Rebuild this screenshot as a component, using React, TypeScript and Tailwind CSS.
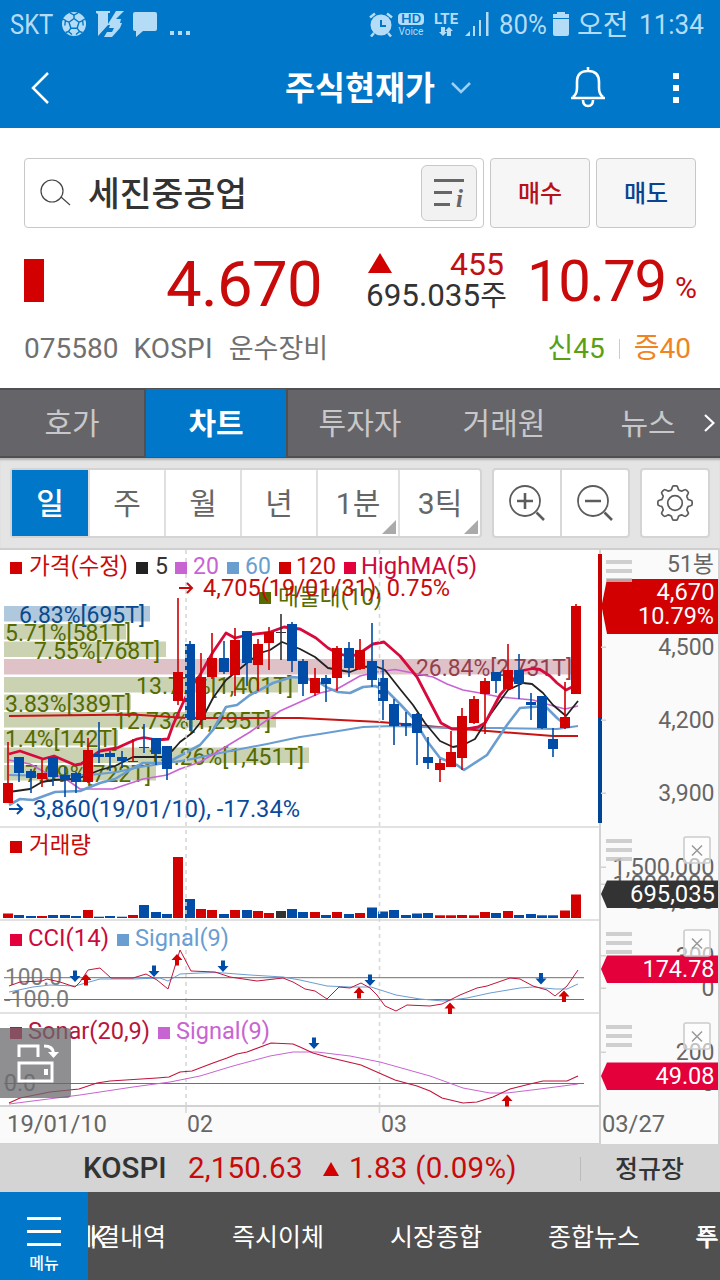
import React from "react";

const RED = "#d20000";
const BLUE = "#004ca6";
const PINK = "#e4003a";
const SKY = "#6a9dd0";
const VIOLET = "#c864d2";
const OLIVE = "#556b00";
const DARK = "#333333";

// type, body top, body bottom, high, low, volume bar height
type Candle = [string, number, number, number, number, number];

const candles: Candle[] = [
    ["r", 783, 803, 742, 803, 4.5],
    ["b", 757, 773, 757, 782, 3],
    ["b", 771, 778, 769, 793, 2],
    ["r", 773, 779, 760, 787, 2],
    ["b", 757, 777, 757, 786, 3],
    ["b", 775, 780, 767, 797, 3],
    ["b", 773, 782, 772, 793, 2],
    ["r", 750, 782, 738, 783, 8],
    ["b", 754, 757, 722, 763, 1.3],
    ["b", 753, 757, 751, 771, 2],
    ["b", 757, 761, 751, 768, 1.3],
    ["r", 761, 762, 739, 762, 3],
    ["b", 747, 748, 724, 753, 13],
    ["b", 738, 754, 738, 765, 6],
    ["b", 746, 769, 746, 780, 4],
    ["r", 672, 701, 598, 705, 61],
    ["b", 644, 720, 641, 731, 19],
    ["r", 677, 720, 653, 725, 9],
    ["r", 658, 677, 633, 679, 8],
    ["b", 658, 672, 641, 674, 4],
    ["r", 640, 675, 628, 696, 8],
    ["b", 631, 663, 631, 686, 8],
    ["r", 644, 665, 639, 691, 7],
    ["r", 632, 643, 627, 670, 5],
    ["k", 632, 633, 614, 660, 7],
    ["b", 624, 661, 622, 672, 9],
    ["b", 661, 684, 659, 696, 6],
    ["r", 678, 693, 668, 696, 6],
    ["b", 678, 684, 675, 702, 3],
    ["r", 648, 678, 646, 691, 6],
    ["b", 648, 668, 642, 677, 4],
    ["r", 650, 669, 639, 670, 5],
    ["b", 661, 680, 623, 687, 10.5],
    ["b", 678, 701, 660, 720, 6.5],
    ["b", 704, 726, 699, 745, 8],
    ["b", 723, 726, 712, 736, 3],
    ["b", 714, 733, 713, 765, 4.5],
    ["b", 757, 763, 737, 769, 5],
    ["r", 763, 770, 759, 782, 2.7],
    ["r", 752, 767, 731, 767, 2.7],
    ["r", 716, 758, 708, 770, 3],
    ["r", 699, 723, 696, 724, 2.7],
    ["r", 681, 694, 678, 734, 6],
    ["b", 672, 681, 672, 693, 5],
    ["r", 670, 689, 644, 690, 7],
    ["b", 670, 684, 654, 699, 3],
    ["b", 702, 705, 693, 720, 4],
    ["b", 696, 728, 696, 729, 2.7],
    ["b", 739, 749, 728, 757, 2.7],
    ["r", 717, 728, 682, 729, 7.5],
    ["r", 606, 694, 604, 694, 23.5],
];

const volumeBands = [
    { y: 606, end: 150, fill: "#afc8de", color: "#0a4a8c", text: "6.83%[695T]", x: 19, w: 126 },
    { y: 624, end: 126, fill: "#cad2b2", color: OLIVE, text: "5.71%[581T]", x: 5, w: 126 },
    { y: 641.5, end: 166, fill: "#cad2b2", color: OLIVE, text: "7.55%[768T]", x: 34, w: 126 },
    { y: 659, end: 572, fill: "#dfc2c8", color: "#94404c", text: "26.84%[2,731T]", x: 416, w: 156 },
    { y: 677, end: 298, fill: "#cad2b2", color: OLIVE, text: "13.77%[1,401T]", x: 136, w: 157 },
    { y: 694.5, end: 131, fill: "#cad2b2", color: OLIVE, text: "3.83%[389T]", x: 5, w: 126 },
    { y: 712, end: 276, fill: "#cad2b2", color: OLIVE, text: "12.73%[1,295T]", x: 114, w: 157 },
    { y: 730, end: 118, fill: "#cad2b2", color: OLIVE, text: "1.4%[142T]", x: 5, w: 113 },
    { y: 747.5, end: 309, fill: "#cad2b2", color: OLIVE, text: "14.26%[1,451T]", x: 148, w: 156 },
    { y: 765, end: 156, fill: "#cad2b2", color: OLIVE, text: "7.09%[722T]", x: 25, w: 126 },
];

const highMa = "9,754 20,751 43,759 54,756 75,765 81,764 100,751 117,748 128,743 137,739 144,737.5 157,740 168,739 173,725 182,705 190,688 200,675 213,652 226,633 235,638 247,635 269,632.5 284,627 300,629 316,638 328,648 337,653 350,657 360,653 373,644 384,642 400,656 417,677 430,702 441,723 452,729 467,729 478,727 485,723 500,695 513,680 520,671 533,668.5 540,669.5 550,676 557,683 566,690 572,687";
const lowMa = "9,805 20,799 33,800 55,792 80,791 100,783 115,779 133,768 143,763 167,763 187,752 200,745 213,730 226,707 237,705 250,695 273,683 292,677 305,678 320,683 328,688 338,692 350,693 363,687 375,686 387,691 400,704 413,718 427,741 440,758 457,765 464,770 487,755 507,725 520,708 545,706 557,718 563,723 570,722";
const ma5 = "9,792 30,789 42,782 53,780 77,779 100,770 115,766 133,757 165,757 173,750 180,742 192,733 200,723 213,698 226,680 247,663 260,653 270,650 282,642 300,649 315,657 328,668 350,672 363,667 375,666 385,670 400,689 413,705 425,723 440,741 453,747 463,745 475,739 490,715 508,690 523,683 532,684 543,693 553,705 566,716 578,701";
const ma20 = "9,760 30,764 50,775 63,777 80,789 113,789 143,779 167,775 180,769 200,762 217,752 250,732 280,711 300,702 320,693 337,689 360,676 377,672 395,669.5 413,673 433,677 447,684 463,690 480,693 500,697 533,700 550,705 565,709 578,706";
const ma60 = "9,775 53,776 90,775 117,772 140,767 187,760 220,753 267,744 300,737 320,734 363,727 393,726 450,728 500,728 557,729 578,726";
const ma120 = "9,716 133,714.5 187,718 300,718 380,722 450,728 500,732 553,736 578,736";
const cci = "9,986 20,982 42,981 47,979 60,982 75,987 80,982 88,970 100,968 111,978 133,978 146,974 157,980 168,989 180,950 191,971 215,972 230,977 257,981 283,978 293,982 300,986 305,989 315,991 327,999 339,987 350,988 361,983 370,988 377,995 385,1006 396,1011 407,1005 430,1006 442,1004 460,995 477,988 487,986 510,978 520,979 533,986 547,990 555,996 567,986 578,970";
const cciSignal = "9,992 33,987 50,985 75,986 100,979 133,979 160,978 168,981 180,974 200,973 217,972.5 250,975 283,977 300,980 327,986 350,987 371,987 396,995 420,999 443,1001 467,998 490,993 520,988 533,987 555,989 567,989 578,984";
const sonar = "9,1103 20,1098 50,1092 79,1089 97,1083 110,1081 157,1078 169,1077 180,1072 192,1071 213,1063 227,1058 237,1054 247,1052 271,1043 293,1044 300,1047 313,1053 327,1057 361,1065 395,1080 417,1086 430,1091 442,1098 463,1103 477,1102 493,1097 510,1089 530,1084 543,1081 567,1081 578,1076";
const sonarSignal = "9,1104 80,1095 133,1087 170,1082 200,1076 233,1066 270,1056 293,1052 317,1052 350,1056 380,1062 430,1076 463,1088 490,1093 507,1093 540,1089 578,1084";

const downArrows = [[75, 982], [154, 977], [223, 972], [370, 986], [541, 984.5], [314, 1049]];
const upArrows = [[86, 974], [177, 954], [359, 987], [450, 1002.5], [564, 990.5], [507, 1095]];

const candleColor = (type: string) => (type === "r" ? RED : type === "b" ? BLUE : DARK);

interface LabelProps {
    x: number;
    y: number;
    fill: string;
    children: string;
    w?: number;
    end?: boolean;
}

const Label: React.FC<LabelProps> = ({ x, y, fill, children, w, end }) => (
    <text
        x={x}
        y={y}
        fill={fill}
        textAnchor={end ? "end" : "start"}
        textLength={w}
        lengthAdjust="spacingAndGlyphs"
        className="text-[23px]"
    >
        {children}
    </text>
);

const Square: React.FC<{ x: number; y: number; fill: string }> = ({ x, y, fill }) => (
    <rect x={x} y={y} width="12" height="12" fill={fill} />
);

const Plot: React.FC = () => (
    <svg viewBox="0 548 600 596" className="block h-[596px] w-[600px] shrink-0">
        <rect x="0" y="548" width="600" height="2" fill="#cfcfcf" />
        <rect x="0" y="1107" width="600" height="37" fill="#fafafa" />
        {[826, 919, 1012].map((y) => (
            <rect key={y} x="0" y={y} width="600" height="2" fill="#e2e2e2" />
        ))}
        <rect x="0" y="1105" width="600" height="2" fill="#d2d2d2" />
        <rect x="0" y="1143" width="600" height="1" fill="#d2d2d2" />

        {/* volume by price */}
        {volumeBands.map((b) => (
            <rect key={b.y} x="4" y={b.y} width={b.end - 4} height="15.5" fill={b.fill} />
        ))}
        {volumeBands.map((b) => (
            <Label key={b.y} x={b.x} y={b.y + 17} w={b.w} fill={b.color}>{b.text}</Label>
        ))}

        <g fill="none" strokeLinejoin="round">
            <polyline points={ma120} stroke="#c81414" strokeWidth="2" />
            <polyline points={ma60} stroke={SKY} strokeWidth="2" />
            <polyline points={ma20} stroke={VIOLET} strokeWidth="1.6" />
            <polyline points={ma5} stroke="#222222" strokeWidth="1.8" />
            <polyline points={lowMa} stroke={SKY} strokeWidth="2.6" />
            <polyline points={highMa} stroke="#d80a3c" strokeWidth="2.8" />
        </g>

        {candles.map(([type, top, bottom, high, low, vol], i) => {
            const x = Math.round(8 + i * 11.36);
            const fill = candleColor(type);
            return (
                <g key={i} fill={fill}>
                    <rect x={x - 0.8} y={high} width="1.6" height={low - high} />
                    <rect x={x - 5} y={top} width="10" height={bottom - top} />
                    <rect x={x - 5} y={918 - vol} width="10" height={vol} />
                </g>
            );
        })}

        {[186, 379.5].map((x) => (
            <g key={x} stroke="#d8d8d8" strokeWidth="1.6">
                <line x1={x} x2={x} y1="550" y2="1105" strokeDasharray="4 4" />
                <line x1={x} x2={x} y1="1107" y2="1113" />
            </g>
        ))}

        {/* price legend */}
        <Square x={10} y={562} fill={RED} />
        <Label x={29} y={574} w={99} fill="#c80a0a">가격(수정)</Label>
        <Square x={136} y={562} fill="#222222" />
        <Label x={155} y={574} fill={DARK}>5</Label>
        <Square x={175} y={562} fill={VIOLET} />
        <Label x={193} y={574} fill={VIOLET}>20</Label>
        <Square x={227} y={562} fill={SKY} />
        <Label x={245} y={574} fill={SKY}>60</Label>
        <Square x={279} y={562} fill={RED} />
        <Label x={296} y={574} w={40} fill="#c80a0a">120</Label>
        <Square x={344} y={562} fill={PINK} />
        <Label x={361} y={574} w={116} fill="#cc0a3c">HighMA(5)</Label>
        <Square x={259} y={592} fill={OLIVE} />
        <Label x={278} y={605} w={104} fill={OLIVE}>매물대(10)</Label>
        <path d="M179 588h12M187 583l5 5l-5 5" fill="none" stroke="#c80a0a" strokeWidth="2" />
        <Label x={203} y={596} w={247} fill="#c80a0a">4,705(19/01/31), 0.75%</Label>
        <path d="M9 809h12M17 804l5 5l-5 5" fill="none" stroke={BLUE} strokeWidth="2" />
        <Label x={33} y={817} w={267} fill="#0a4a9c">3,860(19/01/10), -17.34%</Label>

        {/* volume */}
        <Square x={10} y={841} fill={RED} />
        <Label x={29} y={853} w={62} fill="#c80a0a">거래량</Label>

        {/* CCI */}
        <Label x={5} y={985} w={57} fill="#7c7c7c">100.0</Label>
        <Label x={4} y={1007} w={65} fill="#7c7c7c">-100.0</Label>
        <line x1="4" x2="584" y1="977.7" y2="977.7" stroke="#70706c" />
        <line x1="4" x2="584" y1="999.5" y2="999.5" stroke="#70706c" />
        <polyline points={cciSignal} fill="none" stroke={SKY} strokeWidth="1" />
        <polyline points={cci} fill="none" stroke="#c0143c" strokeWidth="1" />
        <Square x={10} y={934} fill={PINK} />
        <Label x={28} y={946} w={81} fill="#cc0a3c">CCI(14)</Label>
        <Square x={117} y={934} fill={SKY} />
        <Label x={135} y={946} w={94} fill={SKY}>Signal(9)</Label>

        {/* Sonar */}
        <Label x={4} y={1091} w={32} fill="#7c7c7c">0.0</Label>
        <line x1="4" x2="584" y1="1083.5" y2="1083.5" stroke="#70706c" />
        <polyline points={sonarSignal} fill="none" stroke={VIOLET} strokeWidth="1" />
        <polyline points={sonar} fill="none" stroke="#c0143c" strokeWidth="1.1" />
        <Square x={10} y={1027} fill={PINK} />
        <Label x={28} y={1039} w={122} fill="#b8143c">Sonar(20,9)</Label>
        <Square x={158} y={1027} fill={VIOLET} />
        <Label x={176} y={1039} w={94} fill={VIOLET}>Signal(9)</Label>

        {downArrows.map(([x, y]) => (
            <path key={x} d={`M${x} ${y}l-5.5-6h3.5v-5.5h4v5.5h3.5z`} fill={BLUE} />
        ))}
        {upArrows.map(([x, y]) => (
            <path key={x} d={`M${x} ${y}l-5.5 6h3.5v5.5h4v-5.5h3.5z`} fill={RED} />
        ))}

        {/* dates */}
        <Label x={7} y={1132} w={100} fill="#666666">19/01/10</Label>
        <Label x={187} y={1132} fill="#666666">02</Label>
        <Label x={381} y={1132} fill="#666666">03</Label>
    </svg>
);

const Grip: React.FC<{ y: number }> = ({ y }) => (
    <g fill="#c4c4c4" fillOpacity="0.8">
        <rect x="606" y={y} width="26" height="4" />
        <rect x="606" y={y + 9} width="26" height="4" />
        <rect x="606" y={y + 18} width="26" height="4" />
    </g>
);

const Close: React.FC<{ y: number }> = ({ y }) => (
    <g>
        <rect x="684" y={y} width="26" height="26" rx="2" fill="#ffffff" fillOpacity="0.6" stroke="#cccccc" strokeWidth="1.6" />
        <path d={`M692 ${y + 8.5}l10 10m0-10l-10 10`} stroke="#999999" strokeWidth="1.5" />
    </g>
);

const Axis: React.FC = () => (
    <svg viewBox="600 548 120 596" className="block h-[596px] w-[120px] shrink-0 overflow-visible">
        <rect x="600" y="548" width="120" height="596" fill="#fafafa" />
        <rect x="600" y="548" width="120" height="2" fill="#cfcfcf" />
        <rect x="599" y="550" width="2" height="594" fill="#d2d2d2" />
        <rect x="718" y="548" width="2" height="596" fill="#d2d2d2" />
        <rect x="598" y="554" width="4" height="163" fill="#c80000" />
        <rect x="598" y="717" width="4" height="106" fill="#004496" />
        {[647, 720, 793, 867, 884, 955.5, 988, 1052].map((y) => (
            <rect key={y} x="601" y={y - 0.5} width="5" height="1.5" fill="#d2d2d2" />
        ))}
        <g>
            <Label x={714} y={572} end fill="#666666">51봉</Label>
            <Label x={714.5} y={655} end fill="#666666">4,500</Label>
            <Label x={714.5} y={728} end fill="#666666">4,200</Label>
            <Label x={714.5} y={801} end fill="#666666">3,900</Label>
            <Label x={714.5} y={875} end w={102} fill="#666666">1,500,000</Label>
            <Label x={714.5} y={892} end w={102} fill="#666666">1,000,000</Label>
            <Label x={714.5} y={909} end fill="#666666">500,000</Label>
            <Label x={714.5} y={964} end fill="#666666">300</Label>
            <Label x={714.5} y={996} end fill="#666666">0</Label>
            <Label x={714.5} y={1060} end fill="#666666">200</Label>
            <Label x={714.5} y={1091} end fill="#666666">0</Label>
            <Label x={602} y={1132} w={63} fill="#666666">03/27</Label>
        </g>
        <path d="M601.5 606l5.500-27H718v55H607z" fill={RED} />
        <Label x={714.5} y={600} w={58} end fill="#ffffff">4,670</Label>
        <Label x={714} y={624} w={76} end fill="#ffffff">10.79%</Label>
        <path d="M601 894l6-13.500H718v27.500H607z" fill={DARK} />
        <Label x={715} y={902} w={85} end fill="#ffffff">695,035</Label>
        <path d="M601 969l6-13.500H718v27.500H607z" fill={PINK} />
        <Label x={714.5} y={977} w={72} end fill="#ffffff">174.78</Label>
        <path d="M601 1076l6-13.500H718v27.500H607z" fill={PINK} />
        <Label x={714.5} y={1084} w={59} end fill="#ffffff">49.08</Label>
        <Grip y={560} />
        <Grip y={839} />
        <Grip y={932} />
        <Grip y={1025} />
        <Close y={837} />
        <Close y={930} />
        <Close y={1023} />
    </svg>
);

const StatusBar: React.FC = () => (
    <div className="flex h-12 items-center pl-[10px] pr-4 text-[28px] leading-none text-[#b5dcf6]">
        <span className="w-[52px] origin-left scale-x-[0.85] pt-[2px]">SKT</span>
        <svg viewBox="0 0 24 24" className="size-6" fill="none" stroke="#0077c8" strokeWidth="1.400">
            <circle cx="12" cy="12" r="12" fill="currentColor" stroke="none" />
            <path d="M12 6.500l5 3.700-1.900 6H8.900L7 10.200zM12 6.500V2.500M17 10.200l4-1.500M15.100 16.200l2.500 3.500M8.900 16.200l-2.500 3.500M7 10.200L3 8.700" />
            <path d="M8 .8l4 2.200 4-2.200M23.200 7l-2.600 1.500.6 5M20.500 20.500l-3-1-3.500 3M3.500 20.500l3-1 3.500 3M.8 7l2.600 1.500-.6 5" />
        </svg>
        <svg viewBox="0 0 28 26" className="ml-[10px] h-[26px] w-7" fill="currentColor">
            <path d="M0 0h14v2h-2v11L20 0h8l-8 8h5l-1 4h2l-2 5-8 9h-8l3-5h5l2-4h-5l1-3h-2L2 25V3L0 2z" />
        </svg>
        <svg viewBox="0 0 24 25" className="ml-[9px] h-[25px] w-6" fill="currentColor">
            <path d="M2 0h20q2 0 2 2v15q0 2-2 2H10l-7 6v-6H2q-2 0-2-2V2q0-2 2-2z" />
        </svg>
        <div className="ml-[13px] flex gap-1 pt-[18px]">
            <i className="size-1 bg-current" />
            <i className="size-1 bg-current" />
            <i className="size-1 bg-current" />
        </div>
        <svg viewBox="0 0 24 25" className="ml-auto h-[25px] w-6">
            <g stroke="currentColor" strokeWidth="2.500" fill="none">
                <path d="M1 5.500L6 1.500M23 5.500L18 1.500M5 21l-3 3.500M19 21l3 3.500" />
            </g>
            <circle cx="12" cy="13" r="10.500" fill="currentColor" />
            <path d="M12 8v6h5" stroke="#0077c8" strokeWidth="2" fill="none" />
        </svg>
        <div className="ml-[4px] flex w-7 flex-col items-center pt-[2px]">
            <span className="flex h-3 w-[26px] items-center justify-center rounded-sm bg-current"><b className="origin-center scale-x-125 text-[12px] font-medium leading-none text-[#0077c8]">HD</b></span>
            <span className="mt-[2px] text-[10px] leading-none">Voice</span>
        </div>
        <div className="ml-[8px] flex w-[26px] flex-col items-center">
            <span className="text-[15px] font-bold leading-none">LTE</span>
            <svg viewBox="0 0 16 9" className="h-[9px] w-4" fill="currentColor">
                <path d="M5 9L1 5h2V0h4v5h2zM11 0l4 4h-2v5H9V4H7z" />
            </svg>
        </div>
        <svg viewBox="0 0 24 24" className="ml-[6px] h-6 w-6" fill="currentColor">
            <path d="M0 24l5-5v5zM8 14h2v10H8zM14 8h2v16h-2zM21 0h2.500v24H21z" />
        </svg>
        <span className="ml-[10px] w-[54px] origin-left scale-x-[0.92] pt-[2px]">80%</span>
        <svg viewBox="0 0 16 24" className="h-6 w-4" fill="currentColor">
            <path d="M4 0h8v2h4v4H0V2h4zM0 7h16v15q0 2-2 2H2q-2 0-2-2z" />
        </svg>
        <span className="ml-[8px] w-[62px] pt-[3px] text-[28px]">오전</span>
        <span className="w-[65px] origin-left scale-x-[0.93] pt-[2px]">11:34</span>
    </div>
);

const Header: React.FC = () => (
    <header className="h-32 bg-[#0077c8] text-white">
        <StatusBar />
        <div className="flex h-20 items-center pl-[31px] pr-10">
            <svg viewBox="0 0 18 32" className="h-8 w-[18px]" fill="none" stroke="currentColor" strokeWidth="2.500">
                <path d="M17 1L2 16l15 15" />
            </svg>
            <h1 className="ml-[236px] pt-[3px] text-[32.6px] font-bold leading-none">주식현재가</h1>
            <svg viewBox="0 0 20 12" className="ml-[16px] h-3 w-5 text-[#9bd0f6]" fill="none" stroke="currentColor" strokeWidth="2.500">
                <path d="M1 1l9 9l9-9" />
            </svg>
            <svg viewBox="0 0 36 42" className="-mt-[3px] ml-auto h-[42px] w-9" fill="none" stroke="currentColor" strokeWidth="2.600">
                <path d="M18 1v4M1 32h34M3 31q4-3 4-9v-6q0-11 11-11t11 11v6q0 6 4 9M13 34q0 6 5 6t5-6" />
            </svg>
            <div className="ml-[67px] mr-[1px] flex flex-col gap-[6px]">
                <i className="size-[6px] bg-white" />
                <i className="size-[6px] bg-white" />
                <i className="size-[6px] bg-white" />
            </div>
        </div>
    </header>
);

const StockInfo: React.FC = () => (
    <section className="h-[260px] bg-white pl-6 pt-[30px]">
        <div className="flex h-[70px] gap-[6px]">
            <div className="flex w-[460px] items-center rounded border border-[#c8c8c8] pl-[15px] pr-[6px]">
                <svg viewBox="0 0 32 28" className="h-7 w-8" fill="none" stroke="#444" strokeWidth="1.200">
                    <circle cx="12" cy="12" r="11" />
                    <path d="M21 18l9 8" />
                </svg>
                <span className="ml-4 pt-[3px] text-[34.6px] font-medium leading-none text-[#333]">세진중공업</span>
                <div className="ml-auto flex size-14 items-center justify-center rounded-md border border-[#c8c8c8] bg-[#f2f2f2]">
                    <svg viewBox="0 0 32 32" className="size-8 overflow-visible" fill="#666">
                        <path d="M1 2h30v3H1zM1 14h18v3H1zM1 26h16v3H1z" />
                        <text x="23" y="30" className="text-[25px] font-bold italic [font-family:'Liberation_Serif',serif]">i</text>
                    </svg>
                </div>
            </div>
            <button className="w-[100px] rounded border border-[#c8c8c8] bg-[#f6f6f6] pt-[2px] text-[24px] font-medium leading-none text-[#b8101a]">매수</button>
            <button className="w-[100px] rounded border border-[#c8c8c8] bg-[#f6f6f6] pt-[2px] text-[24px] font-medium leading-none text-[#0a4490]">매도</button>
        </div>
        <div className="mt-[18px] flex h-[74px] leading-none">
            <i className="mt-[13px] h-[43px] w-5 bg-[#d20000]" />
            <span className="mt-[7px] w-[278px] text-right text-[63.5px] tracking-[-0.7px] text-[#c80a0a]">4.670</span>
            <div className="ml-[44px] w-[145px] pt-[2px]">
                <div className="flex items-center justify-between pl-[2px] pr-[7px] text-[32px] text-[#c01014]">
                    <svg viewBox="0 0 24 20" className="-mt-[3px] h-5 w-6"><path d="M12 0l12 20H0z" fill="#d20000" /></svg>
                    455
                </div>
                <div className="whitespace-nowrap text-[31.4px] text-[#333]">695.035<span className="text-[29px]">주</span></div>
            </div>
            <span className="ml-[16px] mt-[6px] w-[148px] text-[58px] tracking-[-1.4px] text-[#c80a0a]">10.79</span>
            <span className="mt-[27px] text-[30px] text-[#c80a0a]">%</span>
        </div>
        <div className="mt-[15px] flex items-center pr-[29px] text-[28px] leading-none text-[#707070]">
            <span>075580</span>
            <span className="ml-[15px] tracking-[0.2px]">KOSPI</span>
            <span className="ml-[16px] text-[27px]">운수장비</span>
            <span className="ml-auto text-[#5aa014]">신45</span>
            <i className="mx-[14px] h-5 w-px bg-[#ccc]" />
            <span className="text-[#ee8522]">증40</span>
        </div>
    </section>
);

const tabs = ["호가", "차트", "투자자", "거래원", "뉴스"];

const Tabs: React.FC = () => (
    <nav className="relative flex h-[70px] border-y-2 border-[#505053] bg-[#656469] text-[30px] leading-none text-[#c8c8ca]">
        {tabs.map((tab) =>
            tab === "차트" ? (
                <div key={tab} className="-my-px flex w-36 items-center justify-center border-x-2 border-[#505053] bg-[#0077c8] pt-[2px] font-bold text-white">{tab}</div>
            ) : (
                <div key={tab} className="flex w-36 items-center justify-center pt-[2px]">{tab}</div>
            )
        )}
        <svg viewBox="0 0 11 18" className="absolute right-[5px] top-[24px] h-[18px] w-[11px]" fill="none" stroke="#fff" strokeWidth="2.200">
            <path d="M1 1l8.500 8L1 17" />
        </svg>
    </nav>
);

const Corner: React.FC = () => (
    <svg viewBox="0 0 14 14" className="absolute bottom-[2px] right-[2px] size-[14px]"><path d="M14 0v14H0z" fill="#aaa" /></svg>
);

const gearPath = () => {
    const pts: string[] = [];
    for (let i = 0; i < 96; i++) {
        const a = (i / 96) * Math.PI * 2;
        const r = 15.3 + 1.9 * Math.tanh(2.5 * Math.cos(a * 8));
        pts.push(`${(18 + r * Math.cos(a)).toFixed(2)} ${(18 + r * Math.sin(a)).toFixed(2)}`);
    }
    return `M${pts.join("L")}z`;
};

const Toolbar: React.FC = () => (
    <div className="flex h-[90px] bg-[#e4e4e4] pl-[10px] pt-[10px] text-[30px] leading-none text-[#666] shadow-[inset_0_3px_2px_-1px_#b4b4b4]">
        <div className="flex h-[70px] w-[472px] divide-x-2 divide-[#e0e0e0] rounded border-2 border-[#d4d4d4] bg-white">
            <div className="flex w-[78px] items-center justify-center bg-[#0077c8] pt-[2px] font-medium text-white">일</div>
            <div className="flex w-[76px] items-center justify-center pt-[2px]">주</div>
            <div className="flex w-[76px] items-center justify-center pt-[2px]">월</div>
            <div className="flex w-[76px] items-center justify-center pt-[2px]">년</div>
            <div className="relative flex w-[82px] items-center justify-center pt-[2px]">1분<Corner /></div>
            <div className="relative flex w-[80px] items-center justify-center pt-[2px]">3틱<Corner /></div>
        </div>
        <div className="ml-[10px] flex h-[70px] w-[138px] divide-x-2 divide-[#d8d8d8] rounded border-2 border-[#d4d4d4] bg-white">
            <div className="flex flex-1 items-center justify-center">
                <svg viewBox="0 0 38 38" className="size-[38px]" fill="none" stroke="#5c5c5c">
                    <circle cx="17" cy="17" r="15" strokeWidth="1.800" />
                    <path d="M9 17h16M17 9v16M28.500 28.500l7.500 7.500" strokeWidth="2.600" />
                </svg>
            </div>
            <div className="flex flex-1 items-center justify-center">
                <svg viewBox="0 0 38 38" className="size-[38px]" fill="none" stroke="#5c5c5c">
                    <circle cx="17" cy="17" r="15" strokeWidth="1.800" />
                    <path d="M9 17h16M28.500 28.500l7.500 7.500" strokeWidth="2.600" />
                </svg>
            </div>
        </div>
        <div className="ml-[10px] flex h-[70px] w-[70px] items-center justify-center rounded border-2 border-[#d4d4d4] bg-white">
            <svg viewBox="0 0 36 36" className="size-9" fill="none" stroke="#5c5c5c" strokeWidth="1.700">
                <path d={gearPath()} />
                <circle cx="18" cy="18" r="7.300" />
            </svg>
        </div>
    </div>
);

const Chart: React.FC = () => (
    <section className="relative flex h-[596px] bg-white">
        <Plot />
        <Axis />
        <button className="absolute left-0 top-[480px] flex h-[70px] w-[71px] items-center justify-center rounded-r bg-[#69696e]/75">
            <svg viewBox="0 0 40 40" className="size-10 overflow-visible" fill="none" stroke="#fff" strokeWidth="3">
                <path d="M3 14V3h19v11M3 20h33v18H3zM28 3q9 0 9.500 7" />
                <path d="M32 9h11l-5.500 6z" fill="#fff" stroke="none" />
                <path d="M30 26v6" strokeWidth="4" />
            </svg>
        </button>
    </section>
);

const IndexBar: React.FC = () => (
    <div className="flex h-12 items-center bg-[#d4d4d4] pl-[83px] pt-[2px] text-[29.5px] leading-none text-[#c80a0a]">
        <b className="w-[105px] font-medium text-[#333]">KOSPI</b>
        <span className="w-[135px] tracking-[0.2px]">2,150.63</span>
        <svg viewBox="0 0 16 14" className="h-[14px] w-4"><path d="M8 0l8 14H0z" fill="#d20000" /></svg>
        <span className="ml-[10px] w-[231px] tracking-[0.3px]">1.83 (0.09%)</span>
        <i className="h-6 w-px bg-[#bbb]" />
        <span className="ml-[34px] text-[25px] font-medium text-[#333]">정규장</span>
    </div>
);

const BottomNav: React.FC = () => (
    <nav className="flex h-[88px] bg-[#505050] text-[25px] leading-none text-white">
        <div className="z-10 flex w-[88px] shrink-0 flex-col items-center bg-[#0077c8] pt-[25px]">
            <div className="flex flex-col gap-[10px]">
                <i className="h-[3px] w-[34px] bg-white" />
                <i className="h-[3px] w-[34px] bg-white" />
                <i className="h-[3px] w-[34px] bg-white" />
            </div>
            <span className="mt-[10px] text-[16px] font-medium">메뉴</span>
        </div>
        <div className="relative flex flex-1 items-center overflow-hidden pt-[3px]">
            <span className="-ml-[14px] w-[158px] shrink-0">체결내역</span>
            <span className="w-[158px] shrink-0">즉시이체</span>
            <span className="w-[158px] shrink-0">시장종합</span>
            <span className="w-[148px] shrink-0">종합뉴스</span>
            <span className="shrink-0">투자</span>
            <span className="absolute left-[2px]">K</span>
            <span className="absolute left-[607px]">주</span>
        </div>
    </nav>
);

export default function App() {
    return (
        <div className="flex h-[1280px] w-[720px] flex-col overflow-hidden [font-family:Roboto,'Noto_Sans_CJK_KR',sans-serif]">
            <Header />
            <StockInfo />
            <Tabs />
            <Toolbar />
            <Chart />
            <IndexBar />
            <BottomNav />
        </div>
    );
}
